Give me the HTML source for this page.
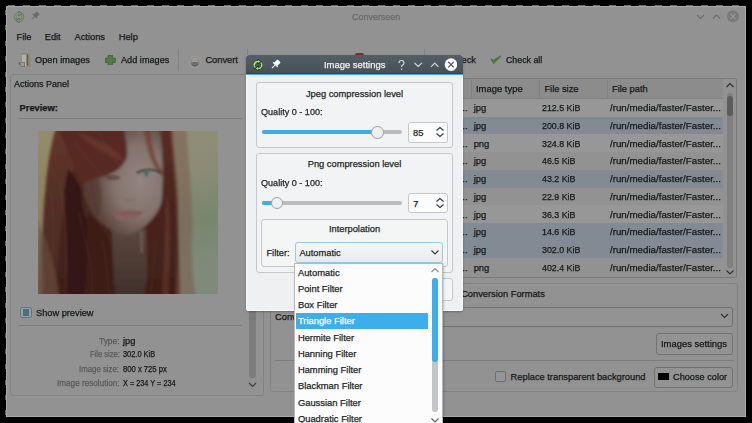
<!DOCTYPE html><html><head><meta charset="utf-8"><style>
html,body{margin:0;padding:0;background:#000;width:752px;height:423px;overflow:hidden;position:relative}
.t{position:absolute;white-space:pre;line-height:1;font-family:"Liberation Sans",sans-serif;-webkit-text-stroke:0.25px currentColor}
</style></head><body>
<div style="position:absolute;left:6px;top:6px;width:740px;height:411px;background:#929292;box-shadow:inset 0 0 0 1px #a9a9a9;"></div>
<div style="position:absolute;left:5px;top:6px;width:1px;height:411px;background:repeating-linear-gradient(180deg,transparent 0 4px,#5a5a5a 4px 9px,transparent 9px 15.4px);"></div>
<div style="position:absolute;left:6px;top:5px;width:740px;height:1px;background:repeating-linear-gradient(90deg,transparent 0 2px,#6a6a6a 2px 9px,transparent 9px 15.4px);"></div>
<div class="t" style="left:351.85px;top:13.13px;font-size:9.3px;color:#6a6a6a;transform:scaleX(0.9632);transform-origin:0 0;">Converseen</div>
<svg style="position:absolute;left:13px;top:11px" width="12" height="12" viewBox="0 0 24 24">
<g fill="none" stroke-linecap="butt">
<path d="M6.5 17 A7 7 0 0 1 12.5 5" stroke="#626a64" stroke-width="5"/>
<path d="M17.5 7 A7 7 0 0 1 11.5 19" stroke="#626a64" stroke-width="5"/>
</g>
<path d="M11.5 0.5 L18.5 5 L11.5 10Z M12.5 23.5 L5.5 19 L12.5 14Z" fill="#626a64" stroke="#626a64" stroke-width="1.6" stroke-linejoin="round"/>
<g fill="none">
<path d="M6.5 17 A7 7 0 0 1 12.5 5" stroke="#7c9866" stroke-width="3"/>
<path d="M17.5 7 A7 7 0 0 1 11.5 19" stroke="#7c9866" stroke-width="3"/>
</g>
<path d="M12 2 L17 5 L12 8Z M12 22 L7 19 L12 16Z" fill="#7c9866"/>
<path d="M5.5 12 A6.5 6.5 0 0 1 10 5.5" stroke="#9aa890" stroke-width="1.2" fill="none" opacity="0.8"/>
</svg>
<svg style="position:absolute;left:30px;top:11px" width="10" height="10" viewBox="0 0 12 12">
<g transform="rotate(45 6 6)">
<rect x="3.6" y="0.5" width="4.8" height="5.5" rx="0.6" fill="#6a6a6a"/>
<rect x="2.4" y="5.4" width="7.2" height="1.4" fill="#6a6a6a"/>
<rect x="5.4" y="6.5" width="1.2" height="5" fill="#6a6a6a"/>
</g></svg>
<svg style="position:absolute;left:690px;top:8px" width="56" height="18" viewBox="0 0 56 18">
<path d="M7 7 L10.5 10.5 L14 7" stroke="#6e6e6e" stroke-width="1.1" fill="none"/>
<path d="M23 10.5 L26.5 7 L30 10.5" stroke="#6e6e6e" stroke-width="1.1" fill="none"/>
<circle cx="43" cy="8.3" r="6" fill="#7a7a7a"/>
<path d="M40.5 5.8 L45.5 10.8 M45.5 5.8 L40.5 10.8" stroke="#9a9a9a" stroke-width="1.1"/></svg>
<div class="t" style="left:16.50px;top:33.43px;font-size:9.3px;color:#161818;">File</div>
<div class="t" style="left:44.70px;top:33.43px;font-size:9.3px;color:#161818;">Edit</div>
<div class="t" style="left:74.50px;top:33.43px;font-size:9.3px;color:#161818;">Actions</div>
<div class="t" style="left:118.70px;top:33.43px;font-size:9.3px;color:#161818;">Help</div>
<svg style="position:absolute;left:18px;top:53px" width="14" height="15" viewBox="0 0 14 15">
<rect x="3" y="0.3" width="9.2" height="13.5" fill="#8e856c"/>
<rect x="3.8" y="1.6" width="5.6" height="11.5" fill="#b2b0aa"/>
<rect x="8.6" y="1.6" width="1.3" height="11" fill="#4e4e4e"/>
<path d="M0.8 9.5 Q1 12.5 3 13.5 L 7 13.5 L 7 9 Z" fill="#5c5c5c"/>
<rect x="2.5" y="9.5" width="4" height="3.5" fill="#9c9a94"/>
</svg>
<div class="t" style="left:35.00px;top:56.23px;font-size:9.3px;color:#161818;transform:scaleX(0.9944);transform-origin:0 0;">Open images</div>
<svg style="position:absolute;left:105px;top:54.5px" width="10.5" height="10.5" viewBox="0 0 10.5 10.5">
<path d="M3.1 0.2 H7.4 V3.1 H10.3 V7.4 H7.4 V10.3 H3.1 V7.4 H0.2 V3.1 H3.1Z" fill="#557a44" stroke="#3d5c30" stroke-width="0.8"/></svg>
<div class="t" style="left:121.00px;top:56.23px;font-size:9.3px;color:#161818;transform:scaleX(0.9856);transform-origin:0 0;">Add images</div>
<div style="position:absolute;left:178px;top:49px;width:1px;height:22px;background:#828282;"></div>
<svg style="position:absolute;left:189px;top:55.5px" width="12" height="12" viewBox="0 0 12 12">
<defs><linearGradient id="gg" x1="0" y1="0" x2="0" y2="1"><stop offset="0" stop-color="#a4a4a4"/><stop offset="0.5" stop-color="#8c8c8c"/><stop offset="1" stop-color="#4e4e4e"/></linearGradient></defs>
<g fill="url(#gg)"><rect x="5.1" y="0" width="1.8" height="3" transform="rotate(0 6 6)"/><rect x="5.1" y="0" width="1.8" height="3" transform="rotate(30 6 6)"/><rect x="5.1" y="0" width="1.8" height="3" transform="rotate(60 6 6)"/><rect x="5.1" y="0" width="1.8" height="3" transform="rotate(90 6 6)"/><rect x="5.1" y="0" width="1.8" height="3" transform="rotate(120 6 6)"/><rect x="5.1" y="0" width="1.8" height="3" transform="rotate(150 6 6)"/><rect x="5.1" y="0" width="1.8" height="3" transform="rotate(180 6 6)"/><rect x="5.1" y="0" width="1.8" height="3" transform="rotate(210 6 6)"/><rect x="5.1" y="0" width="1.8" height="3" transform="rotate(240 6 6)"/><rect x="5.1" y="0" width="1.8" height="3" transform="rotate(270 6 6)"/><rect x="5.1" y="0" width="1.8" height="3" transform="rotate(300 6 6)"/><rect x="5.1" y="0" width="1.8" height="3" transform="rotate(330 6 6)"/><circle cx="6" cy="6" r="4.3"/></g><circle cx="6" cy="6" r="2.6" fill="#9a9a9a"/><path d="M3.4 6 A2.6 2.6 0 0 0 8.6 6Z" fill="#6a6a6a"/></svg>
<div class="t" style="left:205.40px;top:56.23px;font-size:9.3px;color:#161818;">Convert</div>
<div style="position:absolute;left:247px;top:49px;width:1px;height:22px;background:#828282;"></div>
<div style="position:absolute;left:355px;top:52.5px;width:9px;height:3px;border-radius:2px 2px 0 0;background:#7e2c2a;"></div>
<div style="position:absolute;left:424px;top:49px;width:1px;height:22px;background:#828282;"></div>
<div class="t" style="left:439.82px;top:56.23px;font-size:9.3px;color:#161818;">Uncheck</div>
<svg style="position:absolute;left:490px;top:55px" width="12" height="10" viewBox="0 0 12 10">
<path d="M0.8 3.5 L3.6 8.8 L11 1.2 L10.6 0.8 L3.4 5.2 Z" fill="#4e7a3c" stroke="#3e6430" stroke-width="0.6" stroke-linejoin="round"/></svg>
<div class="t" style="left:506.20px;top:56.23px;font-size:9.3px;color:#161818;transform:scaleX(0.9491);transform-origin:0 0;">Check all</div>
<div style="position:absolute;left:10px;top:74px;width:254px;height:322px;border:1px solid #828282;border-radius:3px;box-sizing:border-box;"></div>
<div class="t" style="left:14.00px;top:79.53px;font-size:9.3px;color:#161818;transform:scaleX(0.9672);transform-origin:0 0;">Actions Panel</div>
<div class="t" style="left:19.60px;top:104.23px;font-size:9.3px;color:#161818;font-weight:bold;">Preview:</div>
<div style="position:absolute;left:19px;top:118px;width:223px;height:1px;background:#7c7c7c;"></div>
<div id="photo" style="position:absolute;left:38px;top:131px;width:180px;height:163px;overflow:hidden;"><svg width="180" height="163" viewBox="0 0 180 163">
<defs>
<linearGradient id="bgG" x1="0" y1="0" x2="0.3" y2="1">
<stop offset="0" stop-color="#929078"/><stop offset="0.45" stop-color="#8c8c76"/><stop offset="0.75" stop-color="#78866e"/><stop offset="1" stop-color="#808a7a"/>
</linearGradient>
<linearGradient id="bgL" x1="0" y1="0" x2="0" y2="1">
<stop offset="0" stop-color="#948c6a"/><stop offset="0.6" stop-color="#8a7e5e"/><stop offset="1" stop-color="#6e5a48"/>
</linearGradient>
<radialGradient id="faceG" cx="0.7" cy="0.5" r="0.6">
<stop offset="0" stop-color="#938580"/><stop offset="0.55" stop-color="#84736d"/><stop offset="1" stop-color="#5a433b"/>
</radialGradient>
<linearGradient id="neckG" x1="0" y1="0" x2="0" y2="1">
<stop offset="0" stop-color="#5a463e"/><stop offset="1" stop-color="#3e302a"/>
</linearGradient>
<linearGradient id="hairG" x1="0" y1="0" x2="0" y2="1"><stop offset="0" stop-color="#5a2c23"/><stop offset="0.45" stop-color="#4a241d"/><stop offset="1" stop-color="#3e1e18"/></linearGradient>
<linearGradient id="hairL" x1="0" y1="0" x2="0" y2="1"><stop offset="0" stop-color="#62362a"/><stop offset="0.5" stop-color="#512e25"/><stop offset="1" stop-color="#4a2c24"/></linearGradient>
<filter id="bl" x="-10%" y="-10%" width="120%" height="120%"><feGaussianBlur stdDeviation="1.5"/></filter>
<filter id="bl2" x="-20%" y="-20%" width="140%" height="140%"><feGaussianBlur stdDeviation="0.8"/></filter>
</defs>
<rect width="180" height="163" fill="url(#bgG)"/>
<rect width="40" height="163" fill="url(#bgL)"/>
<g filter="url(#bl)">
<!-- main hair mass -->
<path d="M18 -4 L 132 -4 C 136 20, 140 50, 140 80 C 140 110, 142 140, 142 167 L 2 167 C 3 140, 4 110, 6 78 C 8 50, 10 25, 18 -4 Z" fill="url(#hairG)"/>
<!-- left lighter upper hair -->
<path d="M18 -4 L 70 -4 C 56 14, 42 30, 32 44 C 26 70, 20 110, 18 167 L 4 167 C 4 130, 5 100, 8 74 C 10 45, 12 22, 18 -4Z" fill="url(#hairL)"/>
<!-- left wisps over bg -->
<path d="M0 96 C 6 120, 6 145, 5 167 L 0 167Z" fill="#746250" opacity="0.6"/>
<path d="M0 90 C 10 110, 18 140, 22 167 L 0 167Z" fill="#6e5242" opacity="0.55"/>
<!-- dark deep hair center-left -->
<path d="M30 38 C 44 50, 50 80, 58 98 C 66 115, 70 140, 72 167 L 30 167 C 30 130, 28 95, 26 60Z" fill="#361813"/>
<!-- neck -->
<path d="M74 98 L 108 98 L 110 167 L 76 167 Z" fill="url(#neckG)"/>
<!-- face -->
<path d="M46 62 C 45 34, 70 10, 84 -4 L 122 -4 C 125 20, 127 40, 126 60 C 124 80, 110 98, 90 104 C 72 103, 52 86, 46 62 Z" fill="url(#faceG)"/>
<ellipse cx="54" cy="66" rx="10" ry="24" fill="#503830" opacity="0.55"/>
<!-- bangs -->
<path d="M20 -4 L 86 -4 C 88 8, 90 18, 89 26 C 85 36, 80 40, 68 45 C 60 47, 54 48, 44 52 C 36 38, 28 16, 20 -4 Z" fill="#562b23"/>
<path d="M40 2 C 60 8, 80 18, 86 30 C 70 26, 52 14, 40 2Z" fill="#74402f" opacity="0.5"/>
<!-- hair strand across forehead to right -->
<path d="M112 -4 C 114 20, 118 32, 126 42 L 123 45 C 114 34, 108 20, 106 -4Z" fill="#6e382c" opacity="0.7"/>
<!-- right hair over face edge -->
<path d="M122 -4 L 134 -4 C 137 30, 139 70, 137 110 C 136 135, 139 150, 141 167 L 106 167 C 110 140, 114 120, 118 100 C 124 80, 126 50, 124 20 Z" fill="url(#hairG)"/>
<path d="M132 -4 L 148 -4 C 150 30, 156 70, 154 110 C 153 135, 156 150, 158 167 L 138 167 C 140 130, 142 90, 136 40Z" fill="#7a5c4c" opacity="0.55"/>
<path d="M128 60 C 134 90, 132 120, 130 167 L 124 167 C 126 130, 128 90, 128 60Z" fill="#70402f" opacity="0.5"/>
<!-- left hair over jaw/neck -->
<path d="M50 80 C 60 92, 70 102, 74 120 C 76 140, 76 155, 78 167 L 46 167 C 50 140, 48 110, 50 80Z" fill="#3e1e18"/>
</g>
<g opacity="0.25" stroke="#7a4a3c" stroke-width="1.2" fill="none" filter="url(#bl2)">
<path d="M12 60 C 18 90, 14 130, 12 163"/><path d="M22 50 C 28 90, 30 130, 26 163"/><path d="M40 80 C 48 110, 56 140, 54 163"/>
<path d="M64 110 C 70 130, 68 150, 72 163"/><path d="M118 110 C 114 130, 116 150, 112 163"/><path d="M136 40 C 140 70, 136 120, 138 163"/>
<path d="M36 10 C 50 30, 60 40, 66 44"/><path d="M60 0 C 70 20, 80 30, 84 36"/>
</g>
<g filter="url(#bl2)">
<g transform="translate(0 2)"><path d="M100 41 Q110 35.5 121 40 Q111 46.5 100 41Z" fill="#86847e"/>
<circle cx="108.5" cy="40.8" r="3.2" fill="#6a7e7a"/>
<circle cx="108.5" cy="40.8" r="1.2" fill="#3a3c38"/>
<path d="M99 40 Q110 34.5 122 39.5" stroke="#2e1e1a" stroke-width="1.5" fill="none"/>
</g>
<ellipse cx="75" cy="46.5" rx="7" ry="2.5" fill="#4a2e28" opacity="0.55"/>
<path d="M74 81.5 Q88 77 106 80.5 Q97 92 80 89Z" fill="#84625f"/>
<path d="M76 83 Q90 82 104 82" stroke="#6a4848" stroke-width="0.7" fill="none"/>
<path d="M86 68 Q92 71 98 68" stroke="#70584e" stroke-width="1" fill="none" opacity="0.5"/>
<path d="M102 100 L 104.5 100 L 105 122 L 102.5 122Z" fill="#7e7670" opacity="0.5"/>
</g>
</svg>
</div>
<div style="position:absolute;left:20px;top:307px;width:11.8px;height:11.199999999999989px;border:1.2px solid #5a7686;border-radius:2.5px;box-sizing:border-box;background:#9a9d9f;"></div>
<div style="position:absolute;left:22.9px;top:309.1px;width:6.300000000000001px;height:6.899999999999977px;background:#4a6e84;"></div>
<div class="t" style="left:35.50px;top:309.13px;font-size:9.3px;color:#161818;transform:scaleX(0.9932);transform-origin:0 0;">Show preview</div>
<div style="position:absolute;left:19px;top:325px;width:223px;height:1px;background:#7c7c7c;"></div>
<div class="t" style="left:98.80px;top:336.58px;font-size:9.0px;color:#5a5a5a;transform:scaleX(0.9313);transform-origin:0 0;">Type:</div>
<div class="t" style="left:123.20px;top:336.58px;font-size:9.0px;color:#161818;transform:scaleX(1.0325);transform-origin:0 0;">jpg</div>
<div class="t" style="left:89.50px;top:350.48px;font-size:9.0px;color:#5a5a5a;transform:scaleX(0.8393);transform-origin:0 0;">File size:</div>
<div class="t" style="left:123.20px;top:350.48px;font-size:9.0px;color:#161818;transform:scaleX(0.8225);transform-origin:0 0;">302.0 KiB</div>
<div class="t" style="left:79.30px;top:364.58px;font-size:9.0px;color:#5a5a5a;transform:scaleX(0.8692);transform-origin:0 0;">Image size:</div>
<div class="t" style="left:123.20px;top:364.58px;font-size:9.0px;color:#161818;transform:scaleX(0.8498);transform-origin:0 0;">800 x 725 px</div>
<div class="t" style="left:56.70px;top:378.88px;font-size:9.0px;color:#5a5a5a;transform:scaleX(0.9067);transform-origin:0 0;">Image resolution:</div>
<div class="t" style="left:123.20px;top:378.88px;font-size:9.0px;color:#161818;transform:scaleX(0.8126);transform-origin:0 0;">X = 234 Y = 234</div>
<div style="position:absolute;left:249px;top:300px;width:7px;height:78px;background:#7b7b7b;border-radius:3px;"></div>
<svg style="position:absolute;left:248px;top:382px" width="9" height="6" viewBox="0 0 9 6"><path d="M1 1 L4.5 4.5 L8 1" stroke="#3a3a3a" stroke-width="1.1" fill="none"/></svg>
<div style="position:absolute;left:271px;top:78px;width:466px;height:200px;border:1px solid #7a7a7a;border-radius:2px;box-sizing:border-box;"></div>
<div style="position:absolute;left:272px;top:79px;width:451px;height:20px;background:#8c8c8c;border-bottom:1px solid #828282;box-sizing:border-box;"></div>
<div style="position:absolute;left:471px;top:80px;width:1px;height:18px;background:#828282;"></div>
<div style="position:absolute;left:539px;top:80px;width:1px;height:18px;background:#828282;"></div>
<div style="position:absolute;left:607px;top:80px;width:1px;height:18px;background:#828282;"></div>
<div class="t" style="left:476.30px;top:85.43px;font-size:9.3px;color:#161818;transform:scaleX(1.0151);transform-origin:0 0;">Image type</div>
<div class="t" style="left:544.40px;top:85.43px;font-size:9.3px;color:#161818;">File size</div>
<div class="t" style="left:612.00px;top:85.43px;font-size:9.3px;color:#161818;">File path</div>
<div style="position:absolute;left:272px;top:99.00px;width:451px;height:17.72px;background:#979797"></div>
<div class="t" style="left:462.33px;top:104.23px;font-size:9.3px;color:#161818;">..</div>
<div class="t" style="left:473.70px;top:104.23px;font-size:9.3px;color:#161818;">jpg</div>
<div class="t" style="left:542.20px;top:104.23px;font-size:9.3px;color:#161818;transform:scaleX(0.9500);transform-origin:0 0;">212.5 KiB</div>
<div class="t" style="left:610.00px;top:104.23px;font-size:9.3px;color:#161818;transform:scaleX(1.0476);transform-origin:0 0;">/run/media/faster/Faster...</div>
<div style="position:absolute;left:272px;top:116.72px;width:451px;height:17.72px;background:#828b94"></div>
<div class="t" style="left:462.33px;top:121.95px;font-size:9.3px;color:#161818;">..</div>
<div class="t" style="left:473.70px;top:121.95px;font-size:9.3px;color:#161818;">jpg</div>
<div class="t" style="left:542.20px;top:121.95px;font-size:9.3px;color:#161818;transform:scaleX(0.9500);transform-origin:0 0;">200.8 KiB</div>
<div class="t" style="left:610.00px;top:121.95px;font-size:9.3px;color:#161818;transform:scaleX(1.0476);transform-origin:0 0;">/run/media/faster/Faster...</div>
<div style="position:absolute;left:272px;top:134.44px;width:451px;height:17.72px;background:#979797"></div>
<div class="t" style="left:462.33px;top:139.67px;font-size:9.3px;color:#161818;">..</div>
<div class="t" style="left:473.70px;top:139.67px;font-size:9.3px;color:#161818;">png</div>
<div class="t" style="left:542.20px;top:139.67px;font-size:9.3px;color:#161818;transform:scaleX(0.9500);transform-origin:0 0;">324.8 KiB</div>
<div class="t" style="left:610.00px;top:139.67px;font-size:9.3px;color:#161818;transform:scaleX(1.0476);transform-origin:0 0;">/run/media/faster/Faster...</div>
<div style="position:absolute;left:272px;top:152.16px;width:451px;height:17.72px;background:#929292"></div>
<div class="t" style="left:462.33px;top:157.39px;font-size:9.3px;color:#161818;">..</div>
<div class="t" style="left:473.70px;top:157.39px;font-size:9.3px;color:#161818;">jpg</div>
<div class="t" style="left:542.20px;top:157.39px;font-size:9.3px;color:#161818;transform:scaleX(0.9500);transform-origin:0 0;">46.5 KiB</div>
<div class="t" style="left:610.00px;top:157.39px;font-size:9.3px;color:#161818;transform:scaleX(1.0476);transform-origin:0 0;">/run/media/faster/Faster...</div>
<div style="position:absolute;left:272px;top:169.88px;width:451px;height:17.72px;background:#828b94"></div>
<div class="t" style="left:462.33px;top:175.11px;font-size:9.3px;color:#161818;">..</div>
<div class="t" style="left:473.70px;top:175.11px;font-size:9.3px;color:#161818;">jpg</div>
<div class="t" style="left:542.20px;top:175.11px;font-size:9.3px;color:#161818;transform:scaleX(0.9500);transform-origin:0 0;">43.2 KiB</div>
<div class="t" style="left:610.00px;top:175.11px;font-size:9.3px;color:#161818;transform:scaleX(1.0476);transform-origin:0 0;">/run/media/faster/Faster...</div>
<div style="position:absolute;left:272px;top:187.60px;width:451px;height:17.72px;background:#929292"></div>
<div class="t" style="left:462.33px;top:192.83px;font-size:9.3px;color:#161818;">..</div>
<div class="t" style="left:473.70px;top:192.83px;font-size:9.3px;color:#161818;">jpg</div>
<div class="t" style="left:542.20px;top:192.83px;font-size:9.3px;color:#161818;transform:scaleX(0.9500);transform-origin:0 0;">22.9 KiB</div>
<div class="t" style="left:610.00px;top:192.83px;font-size:9.3px;color:#161818;transform:scaleX(1.0476);transform-origin:0 0;">/run/media/faster/Faster...</div>
<div style="position:absolute;left:272px;top:205.32px;width:451px;height:17.72px;background:#979797"></div>
<div class="t" style="left:462.33px;top:210.55px;font-size:9.3px;color:#161818;">..</div>
<div class="t" style="left:473.70px;top:210.55px;font-size:9.3px;color:#161818;">jpg</div>
<div class="t" style="left:542.20px;top:210.55px;font-size:9.3px;color:#161818;transform:scaleX(0.9500);transform-origin:0 0;">36.3 KiB</div>
<div class="t" style="left:610.00px;top:210.55px;font-size:9.3px;color:#161818;transform:scaleX(1.0476);transform-origin:0 0;">/run/media/faster/Faster...</div>
<div style="position:absolute;left:272px;top:223.04px;width:451px;height:17.72px;background:#828b94"></div>
<div class="t" style="left:462.33px;top:228.27px;font-size:9.3px;color:#161818;">..</div>
<div class="t" style="left:473.70px;top:228.27px;font-size:9.3px;color:#161818;">jpg</div>
<div class="t" style="left:542.20px;top:228.27px;font-size:9.3px;color:#161818;transform:scaleX(0.9500);transform-origin:0 0;">14.6 KiB</div>
<div class="t" style="left:610.00px;top:228.27px;font-size:9.3px;color:#161818;transform:scaleX(1.0476);transform-origin:0 0;">/run/media/faster/Faster...</div>
<div style="position:absolute;left:272px;top:240.76px;width:451px;height:17.72px;background:#828b94"></div>
<div class="t" style="left:462.33px;top:245.99px;font-size:9.3px;color:#161818;">..</div>
<div class="t" style="left:473.70px;top:245.99px;font-size:9.3px;color:#161818;">jpg</div>
<div class="t" style="left:542.20px;top:245.99px;font-size:9.3px;color:#161818;transform:scaleX(0.9500);transform-origin:0 0;">302.0 KiB</div>
<div class="t" style="left:610.00px;top:245.99px;font-size:9.3px;color:#161818;transform:scaleX(1.0476);transform-origin:0 0;">/run/media/faster/Faster...</div>
<div style="position:absolute;left:272px;top:258.48px;width:451px;height:17.72px;background:#929292"></div>
<div class="t" style="left:462.33px;top:263.71px;font-size:9.3px;color:#161818;">..</div>
<div class="t" style="left:473.70px;top:263.71px;font-size:9.3px;color:#161818;">png</div>
<div class="t" style="left:542.20px;top:263.71px;font-size:9.3px;color:#161818;transform:scaleX(0.9500);transform-origin:0 0;">402.4 KiB</div>
<div class="t" style="left:610.00px;top:263.71px;font-size:9.3px;color:#161818;transform:scaleX(1.0476);transform-origin:0 0;">/run/media/faster/Faster...</div>
<svg style="position:absolute;left:725px;top:82px" width="10" height="7" viewBox="0 0 10 7"><path d="M1.5 5 L5 1.5 L8.5 5" stroke="#2f2f2f" stroke-width="1.1" fill="none"/></svg>
<div style="position:absolute;left:727px;top:93px;width:6px;height:175px;background:#7f7f7f;border-radius:3px;"></div>
<div style="position:absolute;left:727px;top:96px;width:6px;height:20px;background:#5c5c5c;border-radius:3px;"></div>
<svg style="position:absolute;left:725px;top:269px" width="10" height="7" viewBox="0 0 10 7"><path d="M1.5 1.5 L5 5 L8.5 1.5" stroke="#2f2f2f" stroke-width="1.1" fill="none"/></svg>
<div style="position:absolute;left:270px;top:283px;width:468px;height:109px;border:1px solid #828282;border-radius:3px;box-sizing:border-box;"></div>
<div class="t" style="left:461.14px;top:290.33px;font-size:9.3px;color:#161818;">Conversion Formats</div>
<div class="t" style="left:275.00px;top:313.13px;font-size:9.3px;color:#161818;">Conversion to:</div>
<div style="position:absolute;left:340px;top:307px;width:393px;height:20px;border:1px solid #727272;border-radius:3px;box-sizing:border-box;background:#939393;"></div>
<svg style="position:absolute;left:720px;top:313px" width="9" height="6" viewBox="0 0 9 6"><path d="M1 1 L4.5 4.5 L8 1" stroke="#2f2f2f" stroke-width="1.1" fill="none"/></svg>
<div style="position:absolute;left:656px;top:333px;width:77px;height:22px;border:1px solid #727272;border-radius:3px;box-sizing:border-box;background:#939393;"></div>
<div class="t" style="left:661.20px;top:339.63px;font-size:9.3px;color:#161818;transform:scaleX(1.0134);transform-origin:0 0;">Images settings</div>
<div style="position:absolute;left:275px;top:360px;width:459px;height:1px;background:#7c7c7c;"></div>
<div style="position:absolute;left:495px;top:371px;width:11px;height:11px;border:1px solid #6e6e6e;border-radius:2px;box-sizing:border-box;background:#959595;"></div>
<div class="t" style="left:510.60px;top:373.33px;font-size:9.3px;color:#161818;">Replace transparent background</div>
<div style="position:absolute;left:654px;top:367px;width:79px;height:21px;border:1px solid #727272;border-radius:3px;box-sizing:border-box;background:#939393;"></div>
<div style="position:absolute;left:658px;top:373px;width:11px;height:7px;background:#000;"></div>
<div class="t" style="left:672.50px;top:372.73px;font-size:9.3px;color:#161818;transform:scaleX(0.9873);transform-origin:0 0;">Choose color</div>
<div style="position:absolute;left:246px;top:55px;width:217px;height:256px;background:#eff0f1;border-radius:3px 3px 3px 3px;box-shadow:inset 1px 0 #f8f9f9, inset -1px 0 #f8f9f9, inset 0 -1px #fafbfb, 0 1px 2px rgba(0,0,0,0.3);overflow:hidden">
<div style="position:absolute;left:0;top:0;width:217px;height:19px;background:linear-gradient(#535e66,#475057);"></div>
<div style="position:absolute;left:0;top:18px;width:217px;height:1px;background:#3b4247;"></div>
<div style="position:absolute;left:0;top:19px;width:217px;height:1px;background:#3daee9;"></div>
</div>
<svg style="position:absolute;left:252px;top:59px" width="12" height="12" viewBox="0 0 24 24">
<g fill="none" stroke-linecap="butt">
<path d="M6.5 17 A7 7 0 0 1 12.5 5" stroke="#26303a" stroke-width="5"/>
<path d="M17.5 7 A7 7 0 0 1 11.5 19" stroke="#26303a" stroke-width="5"/>
</g>
<path d="M11.5 0.5 L18.5 5 L11.5 10Z M12.5 23.5 L5.5 19 L12.5 14Z" fill="#26303a" stroke="#26303a" stroke-width="1.6" stroke-linejoin="round"/>
<g fill="none">
<path d="M6.5 17 A7 7 0 0 1 12.5 5" stroke="#9be060" stroke-width="3"/>
<path d="M17.5 7 A7 7 0 0 1 11.5 19" stroke="#9be060" stroke-width="3"/>
</g>
<path d="M12 2 L17 5 L12 8Z M12 22 L7 19 L12 16Z" fill="#9be060"/>
<path d="M5.5 12 A6.5 6.5 0 0 1 10 5.5" stroke="#e8ffd8" stroke-width="1.2" fill="none" opacity="0.8"/>
</svg>
<svg style="position:absolute;left:270px;top:59px" width="11" height="11" viewBox="0 0 12 12">
<g transform="rotate(45 6 6)">
<rect x="3.6" y="0.5" width="4.8" height="5.5" rx="0.6" fill="#fcfcfc"/>
<rect x="2.4" y="5.4" width="7.2" height="1.4" fill="#fcfcfc"/>
<rect x="5.4" y="6.5" width="1.2" height="5" fill="#fcfcfc"/>
</g></svg>
<div class="t" style="left:323.80px;top:60.53px;font-size:9.3px;color:#eef0f1;transform:scaleX(1.0152);transform-origin:0 0;">Image settings</div>
<svg style="position:absolute;left:395px;top:58px" width="62" height="14" viewBox="0 0 62 14">
<path d="M4 5 Q4 2.5 6.5 2.5 Q9 2.5 9 5 Q9 6.5 7 7.5 L6.5 9" stroke="#d9dcde" stroke-width="1.1" fill="none"/><circle cx="6.5" cy="11.2" r="0.7" fill="#d9dcde"/>
<path d="M19.5 4.8 L23.2 8.5 L26.9 4.8" stroke="#d9dcde" stroke-width="1.1" fill="none"/>
<path d="M36 8.8 L39.7 5 L43.4 8.8" stroke="#d9dcde" stroke-width="1.1" fill="none"/>
<circle cx="56" cy="6.6" r="6.3" fill="#fcfcfc"/>
<path d="M53.2 3.8 L58.8 9.4 M58.8 3.8 L53.2 9.4" stroke="#475057" stroke-width="1.2"/></svg>
<div style="position:absolute;left:256px;top:82px;width:197px;height:66px;border:1px solid #c5c7c9;border-radius:3px;box-sizing:border-box;background:#f2f3f4;"></div>
<div class="t" style="left:305.91px;top:89.73px;font-size:9.3px;color:#232627;">Jpeg compression level</div>
<div class="t" style="left:261.10px;top:108.23px;font-size:9.3px;color:#232627;transform:scaleX(0.9752);transform-origin:0 0;">Quality 0 - 100:</div>
<div style="position:absolute;left:262px;top:130px;width:140px;height:4px;background:#b9bbbd;border-radius:2px;"></div>
<div style="position:absolute;left:262px;top:130px;width:116px;height:4px;background:#3daee9;border-radius:2px;"></div>
<div style="position:absolute;left:371.2px;top:126.1px;width:12.5px;height:12.5px;border-radius:50%;background:#eff0f1;border:1px solid #9fa2a4;box-sizing:border-box;"></div>
<div style="position:absolute;left:408px;top:122px;width:40px;height:21px;border:1px solid #c5c7c9;border-radius:3px;box-sizing:border-box;background:#fcfcfc;"></div>
<div class="t" style="left:413.00px;top:128.63px;font-size:9.3px;color:#232627;">85</div>
<svg style="position:absolute;left:435px;top:126px" width="10" height="12" viewBox="0 0 10 12"><path d="M1.5 4.5 L5 1.5 L8.5 4.5 M1.5 7.5 L5 10.5 L8.5 7.5" stroke="#31363b" stroke-width="1.1" fill="none"/></svg>
<div style="position:absolute;left:256px;top:153px;width:197px;height:120px;border:1px solid #c5c7c9;border-radius:3px;box-sizing:border-box;background:#f2f3f4;"></div>
<div class="t" style="left:307.72px;top:159.83px;font-size:9.3px;color:#232627;">Png compression level</div>
<div class="t" style="left:261.10px;top:178.73px;font-size:9.3px;color:#232627;transform:scaleX(0.9752);transform-origin:0 0;">Quality 0 - 100:</div>
<div style="position:absolute;left:262px;top:200.7px;width:140px;height:4.0px;background:#b9bbbd;border-radius:2px;"></div>
<div style="position:absolute;left:262px;top:200.7px;width:15px;height:4.0px;background:#3daee9;border-radius:2px;"></div>
<div style="position:absolute;left:270.5px;top:196.6px;width:12.5px;height:12.5px;border-radius:50%;background:#eff0f1;border:1px solid #9fa2a4;box-sizing:border-box;"></div>
<div style="position:absolute;left:408px;top:193px;width:40px;height:20px;border:1px solid #c5c7c9;border-radius:3px;box-sizing:border-box;background:#fcfcfc;"></div>
<div class="t" style="left:413.30px;top:199.83px;font-size:9.3px;color:#232627;">7</div>
<svg style="position:absolute;left:435px;top:197px" width="10" height="12" viewBox="0 0 10 12"><path d="M1.5 4.5 L5 1.5 L8.5 4.5 M1.5 7.5 L5 10.5 L8.5 7.5" stroke="#31363b" stroke-width="1.1" fill="none"/></svg>
<div style="position:absolute;left:261px;top:219px;width:187px;height:48px;border:1px solid #c5c7c9;border-radius:3px;box-sizing:border-box;background:#f4f5f5;"></div>
<div class="t" style="left:328.91px;top:225.23px;font-size:9.3px;color:#232627;">Interpolation</div>
<div class="t" style="left:266.40px;top:248.63px;font-size:9.3px;color:#232627;">Filter:</div>
<div style="position:absolute;left:295px;top:242px;width:148px;height:21px;border:1px solid #93cbe6;border-radius:3px;box-sizing:border-box;background:linear-gradient(#f6f7f7,#e9eaeb);"></div>
<svg style="position:absolute;left:430px;top:249px" width="10" height="7" viewBox="0 0 10 7"><path d="M1.5 1.5 L5 5 L8.5 1.5" stroke="#31363b" stroke-width="1.1" fill="none"/></svg>
<div class="t" style="left:299.40px;top:249.13px;font-size:9.3px;color:#232627;">Automatic</div>
<div style="position:absolute;left:400px;top:278px;width:53px;height:23px;border:1px solid #c5c7c9;border-radius:3px;box-sizing:border-box;background:#f4f5f5;"></div>
<div style="position:absolute;left:294px;top:263px;width:149px;height:170px;background:#fcfcfc;border:1px solid #b6b8ba;box-sizing:border-box;box-shadow:1px 1px 2px rgba(0,0,0,0.2)"></div>
<div style="position:absolute;left:296px;top:313px;width:132px;height:16px;background:#3daee9;"></div>
<div class="t" style="left:297.90px;top:267.54px;font-size:9.4px;color:#232627;">Automatic</div>
<div class="t" style="left:297.90px;top:283.79px;font-size:9.4px;color:#232627;">Point Filter</div>
<div class="t" style="left:297.90px;top:300.04px;font-size:9.4px;color:#232627;">Box Filter</div>
<div class="t" style="left:297.90px;top:316.29px;font-size:9.4px;color:#fcfcfc;">Triangle Filter</div>
<div class="t" style="left:297.90px;top:332.54px;font-size:9.4px;color:#232627;">Hermite Filter</div>
<div class="t" style="left:297.90px;top:348.79px;font-size:9.4px;color:#232627;">Hanning Filter</div>
<div class="t" style="left:297.90px;top:365.04px;font-size:9.4px;color:#232627;">Hamming Filter</div>
<div class="t" style="left:297.90px;top:381.29px;font-size:9.4px;color:#232627;">Blackman Filter</div>
<div class="t" style="left:297.90px;top:397.54px;font-size:9.4px;color:#232627;">Gaussian Filter</div>
<div class="t" style="left:297.90px;top:413.79px;font-size:9.4px;color:#232627;">Quadratic Filter</div>
<svg style="position:absolute;left:430px;top:267px" width="10" height="7" viewBox="0 0 10 7"><path d="M1.5 5 L5 1.5 L8.5 5" stroke="#8a8d90" stroke-width="1.1" fill="none"/></svg>
<div style="position:absolute;left:431.5px;top:277.7px;width:6.5px;height:134.8px;background:#c3c5c7;border-radius:3px;"></div>
<div style="position:absolute;left:431.5px;top:277.7px;width:6.5px;height:84.0px;background:#3daee9;border-radius:3px;"></div>
<svg style="position:absolute;left:430px;top:417px" width="10" height="7" viewBox="0 0 10 7"><path d="M1.5 1.5 L5 5 L8.5 1.5" stroke="#5a5d60" stroke-width="1.1" fill="none"/></svg>
</body></html>
